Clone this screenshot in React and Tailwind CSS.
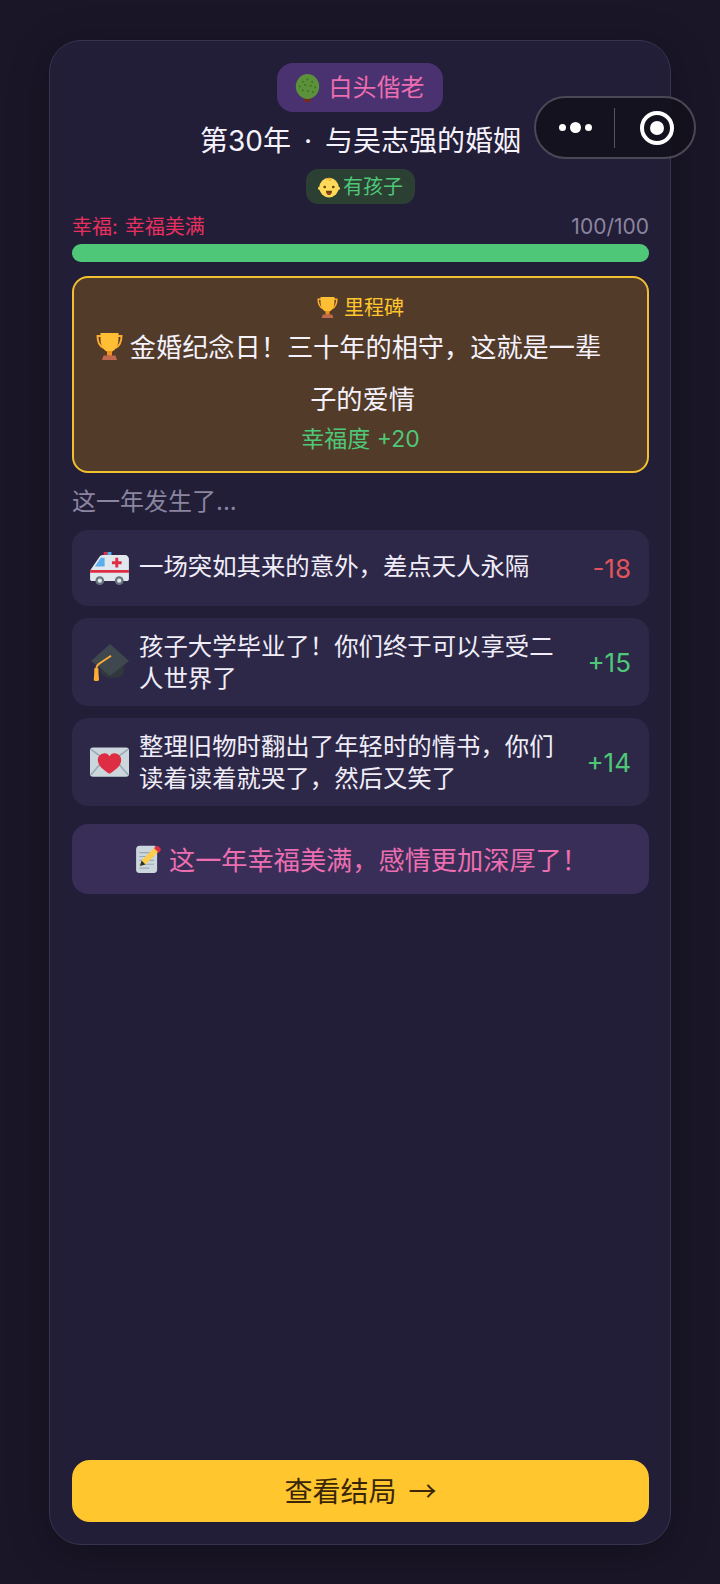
import React from 'react';

const FONT = "font-['Inter','Noto_Sans_CJK_SC',sans-serif]";

const Tree = ({ className }) => (
  <svg viewBox="0 0 32 36" className={className}>
    <path fill="#7a2a18" d="M12 28h8v8h-8z" />
    <ellipse cx="16" cy="16" rx="15" ry="16" fill="#5c913b" />
    <g fill="#3e721d">
      <circle cx="10" cy="10" r="1.3" /><circle cx="16" cy="7" r="1.3" /><circle cx="22" cy="10" r="1.3" />
      <circle cx="6" cy="16" r="1.3" /><circle cx="13" cy="14" r="1.3" /><circle cx="20" cy="15" r="1.3" />
      <circle cx="26" cy="17" r="1.3" /><circle cx="10" cy="21" r="1.3" /><circle cx="17" cy="22" r="1.3" /><circle cx="23" cy="23" r="1.3" />
    </g>
  </svg>
);

const Baby = ({ className }) => (
  <svg viewBox="0 0 36 36" className={className}>
    <circle cx="18" cy="19" r="16" fill="#ffd95a" />
    <circle cx="3" cy="20" r="3" fill="#ffd95a" /><circle cx="33" cy="20" r="3" fill="#ffd95a" />
    <path fill="none" stroke="#e8a020" strokeWidth="1.6" d="M14 6c2-3 7-3 7 0 0 2-3 2-3 0" />
    <circle cx="11" cy="18" r="2.2" fill="#664500" /><circle cx="25" cy="18" r="2.2" fill="#664500" />
    <path fill="#664500" d="M13 24h10c0 4-2 7-5 7s-5-3-5-7z" />
    <path fill="#dd2e44" d="M15 28c1-1 5-1 6 0-1 2-5 2-6 0z" />
  </svg>
);

const Trophy = ({ className }) => (
  <svg viewBox="0 0 36 36" className={className}>
    <path fill="none" stroke="#ffac33" strokeWidth="2.6" d="M8 4H2c0 8 2 13 8 16M28 4h6c0 8-2 13-8 16" />
    <path fill="#ffbe33" d="M6 0h24v8c0 11-6 16-9 17v5h-6v-5c-3-1-9-6-9-17z" />
    <path fill="#f19020" d="M15 24h6v6h-6z" />
    <path fill="#c1694f" d="M10 30h16l2 6H8z" />
  </svg>
);

const Ambulance = ({ className }) => (
  <svg viewBox="0 0 40 34" className={className}>
    <path fill="#dd2e44" d="M14 0h4v4h-4z" />
    <path fill="#55acee" d="M18 0h4v4h-4z" />
    <path fill="#e1e8ed" d="M2 30c-1 0-2-1-2-2v-9L9 6c1-2 2-3 4-3h23c2 0 4 2 4 4v21c0 1-1 2-2 2z" />
    <path fill="#5dadec" d="M5 15l6-9h4v9z" />
    <path fill="#dd2e44" d="M26 6h3v3.500h3.500v3H29V16h-3v-3.500h-3.500v-3H26zM0 18.500h40v3H0z" />
    <circle cx="10" cy="29.500" r="4.500" fill="#66757f" /><circle cx="10" cy="29.500" r="2.200" fill="#e1e8ed" />
    <circle cx="30" cy="29.500" r="4.500" fill="#66757f" /><circle cx="30" cy="29.500" r="2.200" fill="#e1e8ed" />
  </svg>
);

const GradCap = ({ className }) => (
  <svg viewBox="0 0 38 38" className={className}>
    <path fill="#31373d" d="M11 18v10c0 3 5 6 12 6s10-3 10-6V18z" />
    <path fill="#3f484e" d="M20 2l18 16-18 14L2 18z" />
    <path fill="none" stroke="#ffac33" strokeWidth="1.8" d="M21 13l-9 6c-3 2-5 3-5 7v3" />
    <path fill="#ffac33" d="M5 25h4v4l.5 7c-1 1.500-4 1.500-5 0L5 29z" />
  </svg>
);

const LoveLetter = ({ className }) => (
  <svg viewBox="0 0 40 30" className={className}>
    <rect width="40" height="30" rx="3" fill="#ccd6dd" />
    <path fill="none" stroke="#99aab5" strokeWidth="1.6" d="M1 2l19 14L39 2M1 28l13-15M39 28L26 13" />
    <path fill="#dd2e44" d="M20 27C13 23 8 18 8 13c0-4 3-7 7-7 2 0 4 1 5 3 1-2 3-3 5-3 4 0 7 3 7 7 0 5-5 10-12 14z" />
  </svg>
);

const Memo = ({ className }) => (
  <svg viewBox="0 0 36 36" className={className}>
    <path fill="#ccd6dd" d="M4 5c0-2 2-4 4-4h19c2 0 4 2 4 4v27c0 2-2 4-4 4H8c-2 0-4-2-4-4z" />
    <path fill="#99aab5" d="M8 9h19v1.500H8zM8 14h19v1.500H8zM8 19h19v1.500H8zM8 24h19v1.500H8zM8 29h13v1.500H8z" />
    <path fill="#ffcc4d" d="M28 3l5 5-17 17-7 2 2-7z" />
    <path fill="#dd2e44" d="M29 2c1-1 3-1 4 0l2 2c1 1 1 3 0 4l-2 2-6-6z" />
    <path fill="#292f33" d="M11 20l-2 7 7-2z" />
  </svg>
);

const EVENTS = [
  { Icon: Ambulance, iconClass: 'w-[39px] h-[33px]', text: '一场突如其来的意外\uFF0C差点天人永隔', value: '-18', tone: 'text-[#e0555c]', rowClass: 'h-[76px]', textClass: 'pb-[4px]' },
  { Icon: GradCap, iconClass: 'w-[40px] h-[40px]', text: '孩子大学毕业了\uFF01你们终于可以享受二人世界了', value: '+15', tone: 'text-[#4ec878]', rowClass: 'h-[88px]', textClass: '' },
  { Icon: LoveLetter, iconClass: 'w-[39px] h-[32px]', text: '整理旧物时翻出了年轻时的情书\uFF0C你们读着读着就哭了\uFF0C然后又笑了', value: '+14', tone: 'text-[#4ec878]', rowClass: 'h-[88px]', textClass: '' },
];

const EventRow = ({ Icon, iconClass, text, value, tone, rowClass, textClass }) => (
  <div className={`flex items-center rounded-[16px] bg-[#2d2848] pl-[17px] pr-[18px] ${rowClass}`}>
    <div className="w-[40px] shrink-0 flex justify-center">
      <Icon className={iconClass} />
    </div>
    <p className={`ml-[10px] w-[424px] text-[24.4px] leading-[32px] text-[#f0edf8] ${textClass}`}>{text}</p>
    <span className={`ml-auto text-[26px] ${tone}`}>{value}</span>
  </div>
);

export default function App() {
  return (
    <div className={`relative h-[1584px] w-[720px] overflow-hidden bg-[#1a1628] pl-[49px] pt-[40px] ${FONT}`}>
      <div className="flex h-[1505px] w-[622px] flex-col rounded-[32px] border border-[#38334f] bg-[#221e38] pb-[22px] pl-[22px] pr-[21px] pt-[22px] shadow-[0_8px_40px_rgba(0,0,0,0.3)]">
        <div className="flex flex-col items-center">
          <div className="mr-[2px] flex h-[49px] w-[166px] items-center justify-center gap-[9px] rounded-[16px] bg-[#4a3270] text-[24px] text-[#ec6eb0]">
            <Tree className="h-[28px] w-[25px]" />
            <span>白头偕老</span>
          </div>
          <h1 className="mt-[9px] h-[38px] text-[28px] font-normal leading-[40px] text-[#f5f2fc]">
            第30年<span className="mx-[13px]">·</span>与吴志强的婚姻
          </h1>
          <div className="mt-[10px] flex h-[35px] w-[109px] items-center justify-center gap-[3px] rounded-[12px] bg-[#2b3f33] text-[20px] text-[#4ec878]">
            <Baby className="h-[22px] w-[22px]" />
            <span>有孩子</span>
          </div>
        </div>

        <div className="mt-[11px] flex h-[24px] items-center justify-between text-[20px]">
          <span className="text-[#e8305f]">幸福:<span className="ml-[7px]">幸福美满</span></span>
          <span className="text-[21px] text-[#8b85a0]">100/100</span>
        </div>
        <div className="mt-[5px] h-[18px] rounded-full bg-[#4ec878]" />

        <div className="mt-[14px] flex h-[197px] flex-col items-center rounded-[16px] border-2 border-[#f0c030] bg-[#523b28]">
          <div className="mt-[17px] flex h-[25px] items-center gap-[6px] text-[20px] text-[#ffc62e]">
            <Trophy className="h-[21px] w-[21px]" />
            <span>里程碑</span>
          </div>
          <div className="flex h-[52px] items-center gap-[7px] pr-[24px] text-[26.2px] text-[#f5f2fc]">
            <Trophy className="h-[27px] w-[27px]" />
            <span className="pt-[4px]">{'金婚纪念日\uFF01三十年的相守\uFF0C这就是一辈'}</span>
          </div>
          <div className="ml-[4px] mt-[1px] flex h-[52px] items-center pt-[2px] text-[26.2px] text-[#f5f2fc]">子的爱情</div>
          <div className="text-[23px] leading-[28px] text-[#4ec878]">幸福度 +20</div>
        </div>

        <p className="mt-[13px] text-[24px] leading-[32px] text-[#8b85a0]">这一年发生了...</p>

        <div className="mt-[12px] flex flex-col gap-[12px]">
          {EVENTS.map((event) => (
            <EventRow key={event.value} {...event} />
          ))}
        </div>

        <div className="mt-[18px] flex h-[70px] items-center justify-center gap-[8px] rounded-[16px] bg-[#382e57] text-[26.2px] text-[#ec6eb0]">
          <Memo className="h-[28px] w-[28px]" />
          <span className="pt-[4px]">{'这一年幸福美满\uFF0C感情更加深厚了\uFF01'}</span>
        </div>

        <button className="mt-auto h-[62px] rounded-[18px] bg-[#ffc62e] text-[28px] text-[#3a2606]">
          查看结局 <span className="ml-[4px] font-['Noto_Sans_CJK_SC']">→</span>
        </button>
      </div>

      <div className="absolute left-[534px] top-[96px] flex h-[63px] w-[162px] items-center rounded-full border-2 border-[#4a4756] bg-[#13111c]/90">
        <div className="flex w-[78px] items-center justify-center gap-[4px]">
          <span className="h-[7px] w-[7px] rounded-full bg-white" />
          <span className="h-[11px] w-[11px] rounded-full bg-white" />
          <span className="h-[7px] w-[7px] rounded-full bg-white" />
        </div>
        <div className="h-[40px] w-px bg-[#55525f]" />
        <div className="ml-[25px] flex h-[34px] w-[34px] items-center justify-center rounded-full border-[4px] border-white">
          <span className="h-[14px] w-[14px] rounded-full bg-white" />
        </div>
      </div>
    </div>
  );
}
